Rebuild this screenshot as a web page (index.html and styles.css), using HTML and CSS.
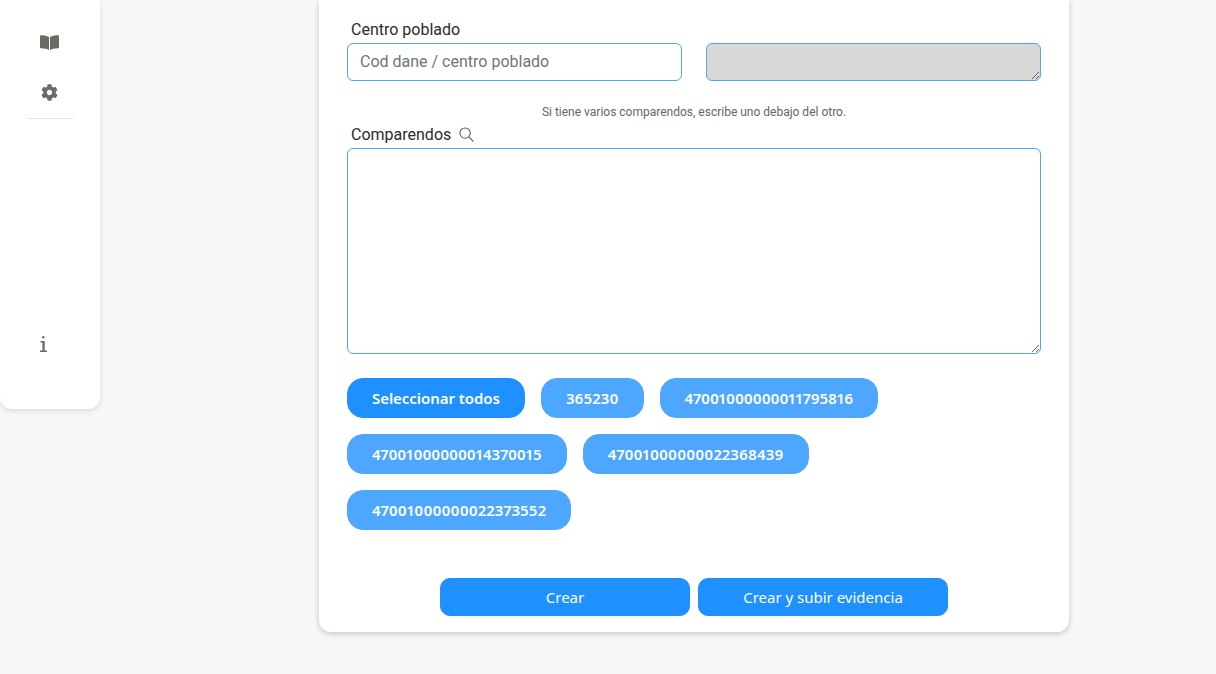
FILE: index.html
```html
<!DOCTYPE html>
<html lang="es">
<head>
<meta charset="utf-8">
<title>Crear comparendos</title>
<link rel="stylesheet" href="styles.css">
</head>
<body>
<div class="page">
  <aside class="sidebar">
    <nav class="side-icons">
      <svg class="icon book" viewBox="0 0 19 15" aria-hidden="true"><path d="M1.200.2C3.800.2 7 .7 9 2v13C7.200 13.900 3.800 13.400 1.200 13.300.5 13.300 0 12.800 0 12.200V1.300C0 .7.500.2 1.200.2zM17.800.2C15.200.2 12 .7 10 2v13c1.800-1.100 5.200-1.600 7.800-1.700.7 0 1.200-.5 1.200-1.100V1.300C19 .7 18.500.2 17.800.2z"/></svg>
      <svg class="icon gear" viewBox="0 0 512 512" aria-hidden="true"><path d="M487.400 315.700l-42.600-24.600c4.300-23.200 4.300-47 0-70.200l42.600-24.600c4.900-2.800 7.100-8.600 5.500-14-11.100-35.600-30-67.800-54.700-94.600-3.800-4.100-10-5.100-14.800-2.300L380.800 110c-17.900-15.400-38.500-27.300-60.800-35.100V25.800c0-5.600-3.900-10.500-9.400-11.700-36.700-8.200-74.300-7.800-109.200 0-5.500 1.200-9.400 6.100-9.400 11.700V75c-22.200 7.900-42.800 19.800-60.800 35.100L88.700 85.500c-4.900-2.800-11-1.900-14.800 2.300-24.700 26.700-43.600 58.900-54.700 94.600-1.700 5.400.6 11.200 5.500 14L67.300 221c-4.300 23.200-4.300 47 0 70.200l-42.600 24.600c-4.900 2.800-7.100 8.600-5.500 14 11.100 35.600 30 67.800 54.700 94.600 3.800 4.100 10 5.100 14.800 2.300l42.600-24.600c17.900 15.400 38.500 27.300 60.800 35.100v49.200c0 5.600 3.900 10.500 9.400 11.700 36.700 8.200 74.300 7.800 109.200 0 5.500-1.200 9.400-6.100 9.400-11.700v-49.200c22.200-7.900 42.800-19.800 60.800-35.100l42.600 24.600c4.900 2.800 11 1.900 14.800-2.300 24.700-26.700 43.600-58.900 54.700-94.600 1.500-5.500-.7-11.300-5.600-14.100zM256 336c-44.100 0-80-35.900-80-80s35.900-80 80-80 80 35.900 80 80-35.900 80-80 80z"/></svg>
    </nav>
    <hr class="side-rule">
    <svg class="icon info" viewBox="0 0 7 16" aria-hidden="true"><circle cx="3.300" cy="1.300" r="1.200"/><path d="M.5 5H4.700V14.400H7V16H0V14.400H2.400V6.400H.5z"/></svg>
  </aside>

  <main class="card">
    <section class="row-fields">
      <div class="field">
        <label class="label" for="cp">Centro poblado</label>
        <input class="control control-input" id="cp" type="text" placeholder="Cod dane / centro poblado">
      </div>
      <div class="field field-end">
        <textarea class="control control-disabled" aria-label="Centro poblado seleccionado"></textarea>
      </div>
    </section>

    <p class="hint">Si tiene varios comparendos, escribe uno debajo del otro.</p>

    <label class="label label-icon" for="comp">Comparendos
      <svg class="search" viewBox="0 0 16 16" aria-hidden="true"><circle cx="6.500" cy="6.500" r="5.500"/><path d="M10.500 10.500L15.500 15.500"/></svg>
    </label>
    <textarea class="control area" id="comp"></textarea>

    <div class="chips">
      <button class="chip chip-all" type="button">Seleccionar todos</button>
      <button class="chip chip-wide" type="button">365230</button>
      <button class="chip" type="button">47001000000011795816</button>
      <button class="chip" type="button">47001000000014370015</button>
      <button class="chip chip-wide" type="button">47001000000022368439</button>
      <button class="chip chip-wide" type="button">47001000000022373552</button>
    </div>

    <div class="actions">
      <button class="action" type="button">Crear</button>
      <button class="action" type="button">Crear y subir evidencia</button>
    </div>
  </main>
</div>
</body>
</html>
```
FILE: styles.css
```css
* { box-sizing: border-box; }
html, body { margin: 0; height: 100%; }
body {
  background: #f8f8f8;
  font-family: Roboto, "Liberation Sans", sans-serif;
  color: #212121;
  overflow: hidden;
}
.page { display: flex; align-items: flex-start; height: 674px; }

.sidebar {
  flex: 0 0 100px;
  height: 409px;
  background: #fff;
  border-radius: 0 0 12px 12px;
  box-shadow: 0 2px 6px rgba(0, 0, 0, .12);
  display: flex;
  flex-direction: column;
  align-items: center;
  padding-top: 35px;
}
.side-icons { display: flex; flex-direction: column; align-items: center; gap: 34px; width: 100%; padding-right: 2px; }
.icon { fill: #6b6b63; display: block; }
.book { width: 19px; height: 15px; margin-left: 1px; }
.gear { width: 17px; height: 17px; }
.side-rule { width: 45px; margin: 17px 0 0; border: 0; border-top: 1px solid #e8e6da; }
.info { width: 7px; height: 16px; margin: 217px 13px 0 0; }

.card {
  width: 750px;
  height: 632px;
  margin-left: 219px;
  background: #fff;
  border-radius: 0 0 12px 12px;
  box-shadow: 0 2px 6px rgba(0, 0, 0, .2);
  padding: 0 28px;
  display: flex;
  flex-direction: column;
}
.row-fields { display: flex; gap: 24px; padding-top: 20px; }
.field { flex: 1 1 0; display: flex; flex-direction: column; }
.field-end { justify-content: flex-end; }
.label { font-size: 16px; line-height: 19px; padding-left: 4px; margin-bottom: 4px; color: #2b2b2b; }
.label-icon { display: flex; align-items: center; gap: 8px; margin: 6px 0 4px; }
.control {
  display: block;
  width: 100%;
  height: 38px;
  border: 1px solid #4da6ff;
  border-radius: 6px;
  background: #fff;
  padding: 0 12px;
  font: 16px/36px Roboto, sans-serif;
  color: #212121;
  outline: none;
  margin: 0;
}
.control-input { padding-bottom: 2px; line-height: 34px; }
.control::placeholder { color: #6c757d; opacity: 1; }
.control-disabled { background: #d8d8d6; resize: vertical; }
.area { height: 206px; resize: vertical; }
.hint { margin: 24px 0 0; font-size: 12px; line-height: 14px; text-align: center; color: #666; }
.search { width: 15px; height: 15px; fill: none; stroke: #555; stroke-width: 1.100; }

.chips { display: flex; flex-wrap: wrap; gap: 16px; margin-top: 24px; width: 694px; }
.chip {
  height: 40px;
  padding: 0 24px;
  border: 1px solid #4da6ff;
  border-radius: 16px;
  background: #4da6ff;
  color: #fff;
  font: 600 15px "Noto Sans", "Open Sans", sans-serif;
  font-variant-numeric: proportional-nums;
  letter-spacing: -.05px;
}
.chip-wide { letter-spacing: .12px; }
.chip-all { background: #1e90ff; border-color: #1e90ff; }
.actions { display: flex; justify-content: center; gap: 8px; margin-top: 48px; }
.action {
  width: 250px;
  height: 38px;
  border: 1px solid #1e90ff;
  border-radius: 10px;
  background: #1e90ff;
  color: #fff;
  font: 400 15px "Noto Sans", "Open Sans", sans-serif;
}
```
